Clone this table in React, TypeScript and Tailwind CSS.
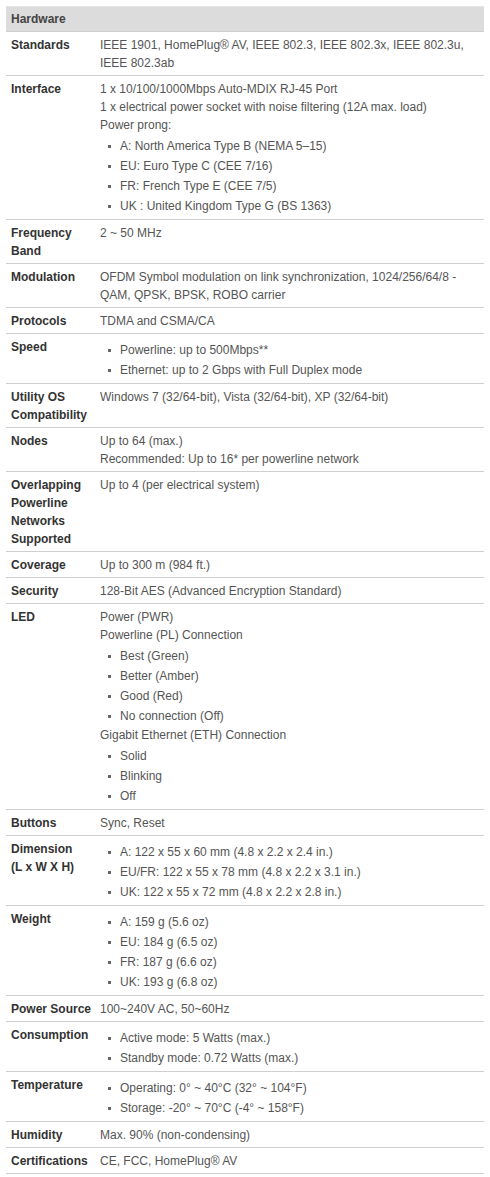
import React from 'react';

// a string is a plain line, an array is a bulleted list
type Block = string | string[];

interface SpecRow {
    label: string[];
    value: Block[];
}

const rows: SpecRow[] = [
    { label: ['Standards'], value: ['IEEE 1901, HomePlug® AV, IEEE 802.3, IEEE 802.3x, IEEE 802.3u, IEEE 802.3ab'] },
    {
        label: ['Interface'],
        value: [
            '1 x 10/100/1000Mbps Auto-MDIX RJ-45 Port',
            '1 x electrical power socket with noise filtering (12A max. load)',
            'Power prong:',
            [
                'A: North America Type B (NEMA 5–15)',
                'EU: Euro Type C (CEE 7/16)',
                'FR: French Type E (CEE 7/5)',
                'UK : United Kingdom Type G (BS 1363)',
            ],
        ],
    },
    { label: ['Frequency Band'], value: ['2 ~ 50 MHz'] },
    { label: ['Modulation'], value: ['OFDM Symbol modulation on link synchronization, 1024/256/64/8 - QAM, QPSK, BPSK, ROBO carrier'] },
    { label: ['Protocols'], value: ['TDMA and CSMA/CA'] },
    { label: ['Speed'], value: [['Powerline: up to 500Mbps**', 'Ethernet: up to 2 Gbps with Full Duplex mode']] },
    { label: ['Utility OS Compatibility'], value: ['Windows 7 (32/64-bit), Vista (32/64-bit), XP (32/64-bit)'] },
    { label: ['Nodes'], value: ['Up to 64 (max.)', 'Recommended: Up to 16* per powerline network'] },
    { label: ['Overlapping Powerline Networks Supported'], value: ['Up to 4 (per electrical system)'] },
    { label: ['Coverage'], value: ['Up to 300 m (984 ft.)'] },
    { label: ['Security'], value: ['128-Bit AES (Advanced Encryption Standard)'] },
    {
        label: ['LED'],
        value: [
            'Power (PWR)',
            'Powerline (PL) Connection',
            ['Best (Green)', 'Better (Amber)', 'Good (Red)', 'No connection (Off)'],
            'Gigabit Ethernet (ETH) Connection',
            ['Solid', 'Blinking', 'Off'],
        ],
    },
    { label: ['Buttons'], value: ['Sync, Reset'] },
    {
        label: ['Dimension', '(L x W X H)'],
        value: [[
            'A: 122 x 55 x 60 mm (4.8 x 2.2 x 2.4 in.)',
            'EU/FR: 122 x 55 x 78 mm (4.8 x 2.2 x 3.1 in.)',
            'UK: 122 x 55 x 72 mm (4.8 x 2.2 x 2.8 in.)',
        ]],
    },
    { label: ['Weight'], value: [['A: 159 g (5.6 oz)', 'EU: 184 g (6.5 oz)', 'FR: 187 g (6.6 oz)', 'UK: 193 g (6.8 oz)']] },
    { label: ['Power Source'], value: ['100~240V AC, 50~60Hz'] },
    { label: ['Consumption'], value: [['Active mode: 5 Watts (max.)', 'Standby mode: 0.72 Watts (max.)']] },
    { label: ['Temperature'], value: [['Operating: 0° ~ 40°C (32° ~ 104°F)', 'Storage: -20° ~ 70°C (-4° ~ 158°F)']] },
    { label: ['Humidity'], value: ['Max. 90% (non-condensing)'] },
    { label: ['Certifications'], value: ['CE, FCC, HomePlug® AV'] },
];

const BulletList: React.FC<{ items: string[] }> = ({ items }) => (
    <ul className="mt-[2px]">
        {items.map(item => (
            <li key={item} className="flex items-start py-[1px]">
                <span className="ml-[8px] mr-[9px] mt-[8px] w-[3px] h-[3px] shrink-0 bg-[#666]" />
                <span>{item}</span>
            </li>
        ))}
    </ul>
);

export default function App() {
    return (
        <div className="min-h-screen bg-white pt-[6px] pl-[6px] font-['Liberation_Sans',Arial,sans-serif] text-[12px] leading-[18px]">
            <div className="w-[478px]">
                {/* Section header */}
                <div className="border-t border-b border-t-[#e4e4e4] border-b-[#cfcfcf] bg-[#dcdcdc] px-[5px] pt-[3px] pb-[3px] font-bold text-[#444]">
                    Hardware
                </div>

                {rows.map(row => (
                    <div key={row.label.join(' ')} className="flex border-b border-[#cfcfcf]">
                        <div className="w-[89px] shrink-0 pl-[5px] pt-[4px] pb-[3px] font-bold text-[#333]">
                            {row.label.map(part => <div key={part}>{part}</div>)}
                        </div>
                        <div className="flex-1 px-[5px] pt-[4px] pb-[3px] text-[#555]">
                            {row.value.map((block, i) =>
                                typeof block === 'string'
                                    ? <div key={i}>{block}</div>
                                    : <BulletList key={i} items={block} />
                            )}
                        </div>
                    </div>
                ))}
            </div>
        </div>
    );
}
